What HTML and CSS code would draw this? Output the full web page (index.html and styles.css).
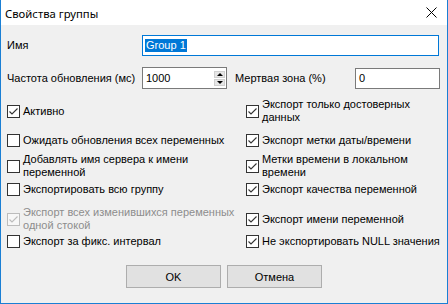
FILE: index.html
```html
<!DOCTYPE html>
<html lang="ru">
<head>
<meta charset="utf-8">
<title>Свойства группы</title>
<link rel="stylesheet" href="styles.css">
</head>
<body>
<div class="window">
  <div class="titlebar">
    <span class="title">Свойства группы</span>
    <span class="close">
      <svg width="11" height="11" viewBox="0 0 11 11"><path d="M0.5 0.5 L10.5 10.5 M10.5 0.5 L0.5 10.5" stroke="#000" stroke-width="1" fill="none"/></svg>
    </span>
  </div>
  <div class="content">
    <div class="field-row name-row">
      <label class="label label-main">Имя</label>
      <div class="input input-name focused"><span class="sel">Group 1</span></div>
    </div>
    <div class="field-row freq-row">
      <label class="label label-main">Частота обновления (мс)</label>
      <div class="input input-freq">
        <span class="val">1000</span>
        <span class="spin">
          <span class="spin-btn"><span class="tri-up"></span></span>
          <span class="spin-btn"><span class="tri-down"></span></span>
        </span>
      </div>
      <label class="label label-dead">Мертвая зона (%)</label>
      <div class="input input-dead"><span class="val">0</span></div>
    </div>

    <div class="cb-row r1">
      <div class="cb-item"><span class="cb checked"><svg viewBox="0 0 11 11"><polyline points="1.5,5.5 4,8 9.5,2.5"/></svg></span><span class="cb-text">Активно</span></div>
      <div class="cb-item"><span class="cb checked"><svg viewBox="0 0 11 11"><polyline points="1.5,5.5 4,8 9.5,2.5"/></svg></span><span class="cb-text">Экспорт только достоверных<br>данных</span></div>
    </div>
    <div class="cb-row r2">
      <div class="cb-item"><span class="cb"></span><span class="cb-text">Ожидать обновления всех переменных</span></div>
      <div class="cb-item"><span class="cb checked"><svg viewBox="0 0 11 11"><polyline points="1.5,5.5 4,8 9.5,2.5"/></svg></span><span class="cb-text">Экспорт метки даты/времени</span></div>
    </div>
    <div class="cb-row r3">
      <div class="cb-item"><span class="cb"></span><span class="cb-text">Добавлять имя сервера к имени<br>переменной</span></div>
      <div class="cb-item"><span class="cb checked"><svg viewBox="0 0 11 11"><polyline points="1.5,5.5 4,8 9.5,2.5"/></svg></span><span class="cb-text">Метки времени в локальном<br>времени</span></div>
    </div>
    <div class="cb-row r4">
      <div class="cb-item"><span class="cb"></span><span class="cb-text">Экспортировать всю группу</span></div>
      <div class="cb-item"><span class="cb checked"><svg viewBox="0 0 11 11"><polyline points="1.5,5.5 4,8 9.5,2.5"/></svg></span><span class="cb-text">Экспорт качества переменной</span></div>
    </div>
    <div class="cb-row r5">
      <div class="cb-item disabled"><span class="cb checked"><svg viewBox="0 0 11 11"><polyline points="1.5,5.5 4,8 9.5,2.5"/></svg></span><span class="cb-text">Экспорт всех изменившихся переменных<br>одной стокой</span></div>
      <div class="cb-item"><span class="cb checked"><svg viewBox="0 0 11 11"><polyline points="1.5,5.5 4,8 9.5,2.5"/></svg></span><span class="cb-text">Экспорт имени переменной</span></div>
    </div>
    <div class="cb-row r6">
      <div class="cb-item"><span class="cb"></span><span class="cb-text">Экспорт за фикс. интервал</span></div>
      <div class="cb-item"><span class="cb checked"><svg viewBox="0 0 11 11"><polyline points="1.5,5.5 4,8 9.5,2.5"/></svg></span><span class="cb-text">Не экспортировать NULL значения</span></div>
    </div>

    <div class="buttons">
      <button class="btn">OK</button>
      <button class="btn">Отмена</button>
    </div>
  </div>
</div>
</body>
</html>
```

FILE: styles.css
```css
html, body {
  margin: 0;
  padding: 0;
  background: #f0f0f0;
}
.window {
  width: 448px;
  height: 304px;
  box-sizing: border-box;
  border-left: 1px solid #1a7fd4;
  border-right: 1px solid #1a7fd4;
  border-bottom: 1px solid #1a7fd4;
  display: flex;
  flex-direction: column;
  font-family: "Liberation Sans", Arial, sans-serif;
  font-size: 11px;
  color: #000;
  overflow: hidden;
}
.titlebar {
  height: 25px;
  flex: 0 0 25px;
  background: #fff;
  display: flex;
  align-items: center;
  justify-content: space-between;
  padding: 0 10px 0 4px;
}
.title {
  font-family: "Noto Sans", "Open Sans", sans-serif;
  font-size: 11.3px;
  color: #000;
  line-height: 16px;
  margin-top: 2px;
}
.close {
  width: 11px;
  height: 11px;
  display: flex;
  margin-bottom: 1px;
}
.content {
  flex: 1;
  background: #f0f0f0;
  padding: 10px 0 0 6px;
  display: flex;
  flex-direction: column;
}
.field-row {
  display: flex;
  align-items: center;
}
.label {
  line-height: 13px;
  white-space: nowrap;
}
.label-main {
  width: 135px;
}
.label-dead {
  width: 120px;
  margin-left: 8px;
}
.input {
  box-sizing: border-box;
  background: #fff;
  border: 1px solid #7a7a7a;
  display: flex;
  align-items: center;
  padding-left: 2px;
}
.input.focused {
  border-color: #0078d7;
}
.input-name {
  width: 297px;
  height: 21px;
}
.sel {
  background: #0078d7;
  color: #fff;
  line-height: 13px;
  padding: 0 1px;
}
.freq-row {
  margin-top: 11px;
}
.input-freq {
  width: 85px;
  height: 22px;
  justify-content: space-between;
  padding-right: 1px;
}
.input-dead {
  width: 85px;
  height: 21px;
}
.val {
  line-height: 13px;
  padding-left: 1px;
}
.spin {
  display: flex;
  flex-direction: column;
  gap: 1px;
}
.spin-btn {
  width: 11px;
  height: 7px;
  box-sizing: border-box;
  background: #e6e6e6;
  border: 1px solid #d0d0d0;
  display: flex;
  align-items: center;
  justify-content: center;
}
.tri-up {
  width: 0;
  height: 0;
  border-left: 3px solid transparent;
  border-right: 3px solid transparent;
  border-bottom: 3px solid #000;
}
.tri-down {
  width: 0;
  height: 0;
  border-left: 3px solid transparent;
  border-right: 3px solid transparent;
  border-top: 3px solid #000;
}
.cb-row {
  display: grid;
  grid-template-columns: 239px 1fr;
  align-items: center;
  padding-left: 0;
}
.r1 { height: 28px; margin-top: 8px; }
.r2 { height: 16px; margin-top: 7px; }
.r3 { height: 28px; margin-top: 4px; }
.r4 { height: 16px; margin-top: 1px; }
.r5 { height: 28px; margin-top: 8px; }
.r6 { height: 16px; margin-top: 0; }
.cb-item {
  display: flex;
  align-items: center;
  gap: 3px;
  white-space: nowrap;
}
.cb {
  width: 13px;
  height: 13px;
  flex: 0 0 13px;
  box-sizing: border-box;
  border: 1px solid #333;
  background: #fff;
  display: flex;
  align-items: center;
  justify-content: center;
}
.cb svg {
  width: 11px;
  height: 11px;
  display: block;
}
.cb svg polyline {
  fill: none;
  stroke: #333;
  stroke-width: 1.1;
}
.cb-text {
  line-height: 13px;
}
.disabled .cb {
  border-color: #bcbcbc;
  background: #f7f7f7;
}
.disabled .cb svg polyline {
  stroke: #bcbcbc;
}
.disabled .cb-text {
  color: #8d8d8d;
}
.buttons {
  display: flex;
  gap: 6px;
  margin-top: 16px;
  padding-left: 119px;
}
.btn {
  width: 95px;
  height: 23px;
  box-sizing: border-box;
  background: #e1e1e1;
  border: 1px solid #adadad;
  font-family: "Liberation Sans", Arial, sans-serif;
  font-size: 11px;
  color: #000;
  padding: 0;
  margin: 0;
}
```
